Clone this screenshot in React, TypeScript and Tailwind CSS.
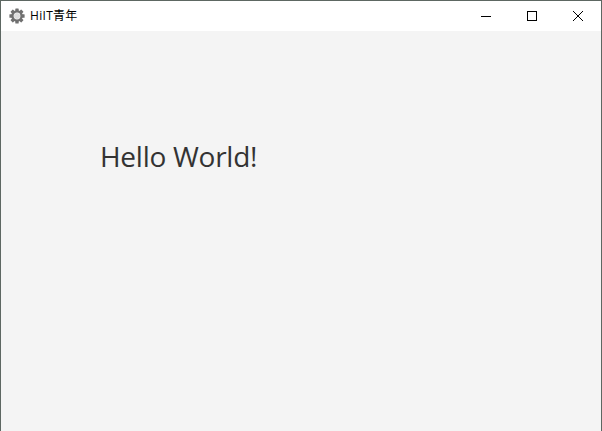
const teeth = [0, 45, 90, 135, 180, 225, 270, 315];

export default function App() {
  return (
    <div className="flex h-[431px] w-[602px] flex-col overflow-hidden border-x border-t border-[#5d6762] bg-[#f4f4f4] font-['Open_Sans','Noto_Sans_CJK_SC',sans-serif]">
      {/* Title bar */}
      <div className="flex h-[30px] shrink-0 items-center justify-between bg-white">
        <div className="flex items-center pl-[8px]">
          <svg width="16" height="16" viewBox="0 0 16 16">
            {teeth.map(a => (
              <rect key={a} x="6.3" y="0.4" width="3.4" height="3.6" rx="0.5" fill="#707070" transform={`rotate(${a} 8 8)`} />
            ))}
            <circle cx="8" cy="8" r="4.6" fill="none" stroke="#707070" strokeWidth="2.4" />
            <circle cx="8" cy="8" r="3" fill="#dedede" />
          </svg>
          <span className="ml-[5px] text-[12px] tracking-[0.3px] text-black">HiIT青年</span>
        </div>
        <div className="flex h-full">
          <div className="flex w-[46px] items-center justify-center">
            <svg width="10" height="10" viewBox="0 0 10 10">
              <path d="M0 5.5H10" stroke="#000" strokeWidth="1" />
            </svg>
          </div>
          <div className="flex w-[46px] items-center justify-center">
            <svg width="10" height="10" viewBox="0 0 10 10">
              <rect x="0.5" y="0.5" width="9" height="9" fill="none" stroke="#000" strokeWidth="1" />
            </svg>
          </div>
          <div className="flex w-[46px] items-center justify-center">
            <svg width="10" height="10" viewBox="0 0 10 10">
              <path d="M0 0L10 10M10 0L0 10" stroke="#000" strokeWidth="1" />
            </svg>
          </div>
        </div>
      </div>

      {/* Content */}
      <div className="flex-1 pl-[99px] pt-[105px]">
        <h1 className="text-[28px] leading-[40px] font-normal tracking-[-0.27px] text-[#333333]">Hello World!</h1>
      </div>
    </div>
  );
}
